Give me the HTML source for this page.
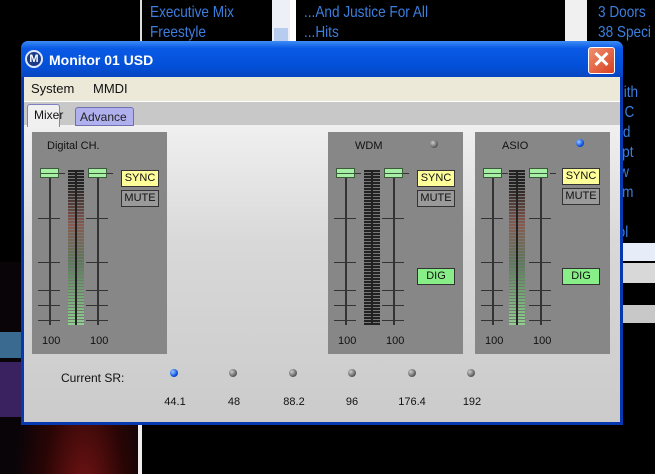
<!DOCTYPE html>
<html><head><meta charset="utf-8"><style>
*{margin:0;padding:0;box-sizing:border-box}
body{width:655px;height:474px;background:#000;position:relative;overflow:hidden;font-family:"Liberation Sans",sans-serif}
.a{position:absolute}
.bt{color:#3b7fe0;font-family:"Liberation Sans Narrow","Liberation Sans",sans-serif;font-size:16px;line-height:20px;transform:scaleX(.85);transform-origin:0 0;white-space:nowrap}
.panel{position:absolute;width:135px;height:222px;background:#878787}
.panel .t{position:absolute;top:8px;font-size:11px;color:#111}
.th{position:absolute;top:36px;width:19px;height:10px;background:#a6f0a6;border:1px solid #3a5a3a}
.th:after{content:"";position:absolute;left:0;right:0;top:4px;height:1px;background:#3a5a3a}
.tr{position:absolute;top:40px;width:2px;height:153px;background:#333}
.tk{position:absolute;height:1px;width:22px;background:#333}
.ds{position:absolute;top:41px;width:6px;height:1px;background:#333}
.m{position:absolute;left:36px;top:38px;width:16px;height:155px;background:repeating-linear-gradient(#222 0 2px,#777 2px 3px);}
.m:after{content:"";position:absolute;left:7px;top:0;width:2px;height:100%;background:#222}
.btn{position:absolute;left:89px;width:38px;height:17px;border:1px solid #333;font-size:11px;text-align:center;line-height:15px;color:#111}
.n{position:absolute;top:203px;font-size:11px;color:#111}
.dot{position:absolute;width:8px;height:8px;border-radius:50%;background:radial-gradient(circle at 35% 35%,#ccc,#555 70%)}
.dot.b{background:radial-gradient(circle at 35% 35%,#9cf,#1050e0 60%,#02247a)}
.lb{position:absolute;top:396px;font-size:11px;color:#111;width:40px;text-align:center}
</style></head><body>
<div class="a" style="left:0;top:0;width:140px;height:260px;background:#000"></div>
<div class="a" style="left:0;top:262px;width:140px;height:212px;background:radial-gradient(ellipse at 60% 115%,#7a1515 0,#2a0505 35%,#080408 60%)"></div>
<div class="a" style="left:0;top:332px;width:22px;height:26px;background:#3a6a90"></div>
<div class="a" style="left:0;top:362px;width:22px;height:55px;background:#3a2260"></div>
<div class="a" style="left:140px;top:0;width:2px;height:42px;background:#ddd"></div>
<div class="a" style="left:272px;top:0;width:18px;height:42px;background:#eef0f8"></div>
<div class="a" style="left:274px;top:28px;width:14px;height:14px;background:#b8ccf0"></div>
<div class="a" style="left:290px;top:0;width:6px;height:42px;background:#fff"></div>
<div class="a" style="left:565px;top:0;width:22px;height:42px;background:#f0f0f0"></div>
<div class="a" style="left:587px;top:0;width:6px;height:474px;background:#000"></div>
<div class="a" style="left:138px;top:424px;width:4px;height:50px;background:#eee"></div>
<div class="a bt" style="left:150px;top:3px">Executive Mix<br>Freestyle</div>
<div class="a bt" style="left:304px;top:3px">...And Justice For All<br>...Hits</div>
<div class="a bt" style="left:598px;top:3px">3 Doors<br>38 Speci<br>'DC<br>ma<br>osmith<br>e In C<br>r Brid<br>calypt<br>oskw<br>l Cam<br>in<br>r Idol</div>
<div class="a" style="left:622px;top:243px;width:33px;height:18px;background:#e6ecf8"></div>
<div class="a" style="left:622px;top:263px;width:33px;height:20px;background:#d8d8d8"></div>
<div class="a" style="left:622px;top:305px;width:33px;height:18px;background:#c8c8c8"></div>
<div class="a" style="left:21px;top:41px;width:602px;height:384px;background:#0838b0;border-radius:7px 7px 0 0"></div>
<div class="a" style="left:21px;top:41px;width:602px;height:36px;border-radius:7px 7px 0 0;background:linear-gradient(#3d8cf6,#0a5ae6 20%,#0350d8 70%,#0846c0)"></div>
<div class="a" style="left:25px;top:50px;width:18px;height:18px;border-radius:50%;background:#1a3a8a;border:2px solid #dfe8ff;color:#fff;font-weight:bold;font-size:11px;text-align:center;line-height:14px">M</div>
<div class="a" style="left:49px;top:52px;color:#fff;font-weight:bold;font-size:14px">Monitor 01 USD</div>
<div class="a" style="left:588px;top:47px;width:27px;height:27px;border-radius:3px;border:1px solid #fff;background:linear-gradient(135deg,#f09070,#d84020);color:#fff;font-size:22px;font-weight:bold;text-align:center;line-height:24px">✕</div>
<div class="a" style="left:24px;top:77px;width:596px;height:25px;background:#ece9d8;font-size:13px;color:#111"><span style="position:absolute;left:7px;top:4px">System</span><span style="position:absolute;left:69px;top:4px">MMDI</span></div>
<div class="a" style="left:24px;top:101px;width:596px;height:1px;background:#fff"></div>
<div class="a" style="left:24px;top:102px;width:596px;height:25px;background:#c8c8c8"></div>
<div class="a" style="left:24px;top:125px;width:596px;height:297px;background:linear-gradient(#f0f0f0,#d8d8d8 40%,#cbcbcb)"></div>
<div class="a" style="left:27px;top:104px;width:33px;height:23px;background:#f0f0f0;border:1px solid #8080c0;border-bottom:none;border-radius:3px 3px 0 0;font-size:12px;padding:3px 0 0 6px;color:#111">Mixer</div>
<div class="a" style="left:75px;top:107px;width:59px;height:19px;background:#b0b0ee;border:1px solid #7070b0;border-radius:3px 3px 0 0;font-size:12px;padding:2px 0 0 4px;color:#222">Advance</div>

<div class="panel" style="left:32px;top:132px">
<div class="t" style="left:15px">Digital CH.</div>
<div class="tr" style="left:17px"></div><div class="tr" style="left:65px"></div>
<div class="tk" style="left:6px;top:86px"></div><div class="tk" style="left:6px;top:130px"></div><div class="tk" style="left:6px;top:158px"></div><div class="tk" style="left:6px;top:173px"></div><div class="tk" style="left:6px;top:188px"></div>
<div class="tk" style="left:54px;top:86px"></div><div class="tk" style="left:54px;top:130px"></div><div class="tk" style="left:54px;top:158px"></div><div class="tk" style="left:54px;top:173px"></div><div class="tk" style="left:54px;top:188px"></div>
<div class="ds" style="left:27px"></div><div class="ds" style="left:75px"></div>
<div class="m" style="background:repeating-linear-gradient(transparent 0 2px,#777 2px 3px),linear-gradient(#222 10%,#8a5a50 35%,#5a7a5a 60%,#8fd08f)"></div>
<div class="th" style="left:8px"></div><div class="th" style="left:56px"></div>
<div class="btn" style="top:38px;background:#ffff99">SYNC</div>
<div class="btn" style="top:58px;background:#9a9a9a">MUTE</div>
<div class="n" style="left:10px">100</div><div class="n" style="left:58px">100</div>
</div>

<div class="panel" style="left:328px;top:132px">
<div class="t" style="left:27px">WDM</div>
<div class="dot" style="left:102px;top:8px"></div>
<div class="tr" style="left:17px"></div><div class="tr" style="left:65px"></div>
<div class="tk" style="left:6px;top:86px"></div><div class="tk" style="left:6px;top:130px"></div><div class="tk" style="left:6px;top:158px"></div><div class="tk" style="left:6px;top:173px"></div><div class="tk" style="left:6px;top:188px"></div>
<div class="tk" style="left:54px;top:86px"></div><div class="tk" style="left:54px;top:130px"></div><div class="tk" style="left:54px;top:158px"></div><div class="tk" style="left:54px;top:173px"></div><div class="tk" style="left:54px;top:188px"></div>
<div class="ds" style="left:27px"></div><div class="ds" style="left:75px"></div>
<div class="m"></div>
<div class="th" style="left:8px"></div><div class="th" style="left:56px"></div>
<div class="btn" style="top:38px;background:#ffff99">SYNC</div>
<div class="btn" style="top:58px;background:#9a9a9a">MUTE</div>
<div class="btn" style="top:136px;background:#88ee88">DIG</div>
<div class="n" style="left:10px">100</div><div class="n" style="left:58px">100</div>
</div>

<div class="panel" style="left:475px;top:132px">
<div class="t" style="left:27px">ASIO</div>
<div class="dot b" style="left:101px;top:7px"></div>
<div class="tr" style="left:17px"></div><div class="tr" style="left:65px"></div>
<div class="tk" style="left:6px;top:86px"></div><div class="tk" style="left:6px;top:130px"></div><div class="tk" style="left:6px;top:158px"></div><div class="tk" style="left:6px;top:173px"></div><div class="tk" style="left:6px;top:188px"></div>
<div class="tk" style="left:54px;top:86px"></div><div class="tk" style="left:54px;top:130px"></div><div class="tk" style="left:54px;top:158px"></div><div class="tk" style="left:54px;top:173px"></div><div class="tk" style="left:54px;top:188px"></div>
<div class="ds" style="left:27px"></div><div class="ds" style="left:75px"></div>
<div class="m" style="left:34px;background:repeating-linear-gradient(transparent 0 2px,#777 2px 3px),linear-gradient(#222 10%,#8a5a50 35%,#5a7a5a 60%,#8fd08f)"></div>
<div class="th" style="left:8px"></div><div class="th" style="left:54px"></div>
<div class="btn" style="left:87px;top:36px;background:#ffff99">SYNC</div>
<div class="btn" style="left:87px;top:56px;background:#9a9a9a">MUTE</div>
<div class="btn" style="left:87px;top:136px;background:#88ee88">DIG</div>
<div class="n" style="left:10px">100</div><div class="n" style="left:58px">100</div>
</div>

<div class="a" style="left:61px;top:371px;font-size:12px;color:#111">Current SR:</div>
<div class="dot b" style="left:170px;top:369px"></div>
<div class="dot" style="left:229px;top:369px"></div>
<div class="dot" style="left:289px;top:369px"></div>
<div class="dot" style="left:348px;top:369px"></div>
<div class="dot" style="left:408px;top:369px"></div>
<div class="dot" style="left:467px;top:369px"></div>
<div class="lb" style="left:155px">44.1</div>
<div class="lb" style="left:214px">48</div>
<div class="lb" style="left:274px">88.2</div>
<div class="lb" style="left:332px">96</div>
<div class="lb" style="left:392px">176.4</div>
<div class="lb" style="left:452px">192</div>
</body></html>
